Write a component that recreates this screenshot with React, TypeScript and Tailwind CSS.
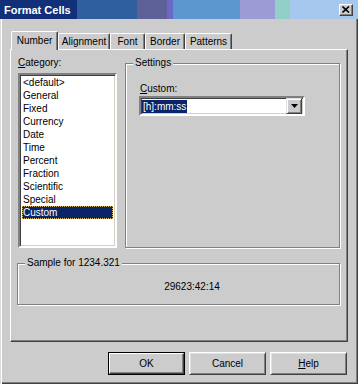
import React from "react";

const items = ["<default>", "General", "Fixed", "Currency", "Date", "Time", "Percent", "Fraction", "Scientific", "Special", "Custom"];

export default function App() {
  return (
    <div className="w-[358px] h-[384px] bg-[#cccccc] font-['Liberation_Sans',Arial,sans-serif] text-[10px] leading-[13px] text-black overflow-hidden flex flex-col">
      {/* Title bar */}
      <div className="h-[19px] shrink-0 flex items-center pl-[4px] pr-[4px] bg-[linear-gradient(90deg,#12307a_0px,#12307a_77px,#2f5f9f_77px,#2f5f9f_137px,#5e6098_137px,#5e6098_167px,#6b68c8_167px,#6b68c8_173px,#5c97cf_173px,#5c97cf_240px,#9c9bd6_240px,#9c9bd6_275px,#92cfc8_275px,#92cfc8_290px,#a6c8ee_290px)]">
        <span className="text-white font-bold text-[11px] leading-[13px] pt-px">Format Cells</span>
        <div className="ml-auto mr-[1px] w-[14px] h-[12px] bg-[#cccccc] border border-white border-r-[#404040] border-b-[#404040] shadow-[inset_-1px_-1px_0_#808080] flex items-center justify-center">
          <svg width="8" height="7" viewBox="0 0 8 7">
            <path d="M0.5 0.5 L7 6.5 M7 0.5 L0.5 6.5" stroke="#000" strokeWidth="1.6" />
          </svg>
        </div>
      </div>

      {/* Body */}
      <div className="flex-1 pt-[12px] shadow-[inset_1px_0_0_#dcdcdc,inset_2px_0_0_#fff,inset_-1px_-1px_0_#404040,inset_-2px_-2px_0_#808080]">
        {/* Tabs */}
        <div className="flex items-end h-[18px] pl-[11px] relative z-10">
          <div className="w-[47px] h-[19px] -mb-px bg-[#cccccc] border-l border-t border-r border-white border-r-[#404040] rounded-t-[2px] shadow-[inset_-1px_0_0_#808080] pt-[2px] text-center">
            Number
          </div>
          <div className="w-[52px] h-[16px] border-l border-t border-r border-white border-r-[#404040] rounded-t-[2px] shadow-[inset_-1px_0_0_#808080] pt-[1px] text-center">
            Alignment
          </div>
          <div className="w-[35px] h-[16px] border-l border-t border-r border-white border-r-[#404040] rounded-t-[2px] shadow-[inset_-1px_0_0_#808080] pt-[1px] text-center">
            Font
          </div>
          <div className="w-[40px] h-[16px] border-l border-t border-r border-white border-r-[#404040] rounded-t-[2px] shadow-[inset_-1px_0_0_#808080] pt-[1px] text-center">
            Border
          </div>
          <div className="w-[47px] h-[16px] border-l border-t border-r border-white border-r-[#404040] rounded-t-[2px] shadow-[inset_-1px_0_0_#808080] pt-[1px] text-center">
            Patterns
          </div>
        </div>

        {/* Tab page */}
        <div className="ml-[10px] w-[338px] h-[293px] border border-white border-r-[#404040] border-b-[#404040] shadow-[inset_-1px_-1px_0_#808080] pt-[6px]">
          <div className="flex">
            <div className="ml-[7px] w-[99px]">
              <div className="h-[13px] mb-[4px]">
                <u>C</u>ategory:
              </div>
              <div className="h-[175px] bg-white border-2 border-[#808080] border-r-white border-b-white shadow-[inset_1px_1px_0_#404040,inset_-1px_-1px_0_#d4d0c8] pt-[1px] pl-[2px] pr-[2px]">
                {items.map((it) => (
                  <div
                    key={it}
                    className={
                      it === "Custom"
                        ? "h-[13px] pl-[1px] bg-[#0a246a] text-white outline outline-1 outline-dotted outline-[#d8b870] -outline-offset-1"
                        : "h-[13px] pl-[1px]"
                    }
                  >
                    {it}
                  </div>
                ))}
              </div>
            </div>

            {/* Settings group */}
            <div className="ml-[8px] mt-[7px] w-[215px] h-[185px] relative border border-[#808080] shadow-[inset_1px_1px_0_#fff,1px_1px_0_#fff] pt-[18px]">
              <div className="absolute left-[7px] top-[-8px] px-[2px] bg-[#cccccc]">Settings</div>
              <div className="ml-[14px] h-[13px] mb-[1px]">
                <u>C</u>ustom:
              </div>
              <div className="ml-[13px] w-[166px] h-[20px] bg-white border-2 border-[#808080] border-r-white border-b-white shadow-[inset_1px_1px_0_#404040,inset_-1px_-1px_0_#d4d0c8] flex items-center pl-px pr-px">
                <span className="h-[13px] px-[1px] bg-[#0a246a] text-white">[h]:mm:ss</span>
                <div className="ml-auto w-[16px] h-[16px] bg-[#cccccc] border border-[#dfdfdf] border-r-[#404040] border-b-[#404040] shadow-[inset_1px_1px_0_#fff,inset_-1px_-1px_0_#808080] flex items-center justify-center">
                  <svg width="7" height="4" viewBox="0 0 7 4">
                    <path d="M0 0 H7 L3.5 4 Z" fill="#000" />
                  </svg>
                </div>
              </div>
            </div>
          </div>

          {/* Sample group */}
          <div className="ml-[6px] mt-[15px] w-[323px] h-[42px] relative border border-[#808080] shadow-[inset_1px_1px_0_#fff,1px_1px_0_#fff] pt-[16px] pl-[27px] text-center">
            <div className="absolute left-[7px] top-[-8px] px-[2px] bg-[#cccccc] text-left">Sample for 1234.321</div>
            29623:42:14
          </div>
        </div>

        {/* Buttons */}
        <div className="flex justify-end gap-[4px] pr-[11px] mt-[10px]">
          <div className="w-[77px] h-[23px] border border-black">
            <div className="w-full h-full border border-white border-r-[#404040] border-b-[#404040] shadow-[inset_-1px_-1px_0_#808080] flex items-center justify-center">
              OK
            </div>
          </div>
          <div className="w-[77px] h-[23px] border border-white border-r-[#404040] border-b-[#404040] shadow-[inset_1px_1px_0_#dfdfdf,inset_-1px_-1px_0_#808080] flex items-center justify-center">
            Cancel
          </div>
          <div className="w-[77px] h-[23px] border border-white border-r-[#404040] border-b-[#404040] shadow-[inset_1px_1px_0_#dfdfdf,inset_-1px_-1px_0_#808080] flex items-center justify-center">
            <span>
              <u>H</u>elp
            </span>
          </div>
        </div>
      </div>
    </div>
  );
}
